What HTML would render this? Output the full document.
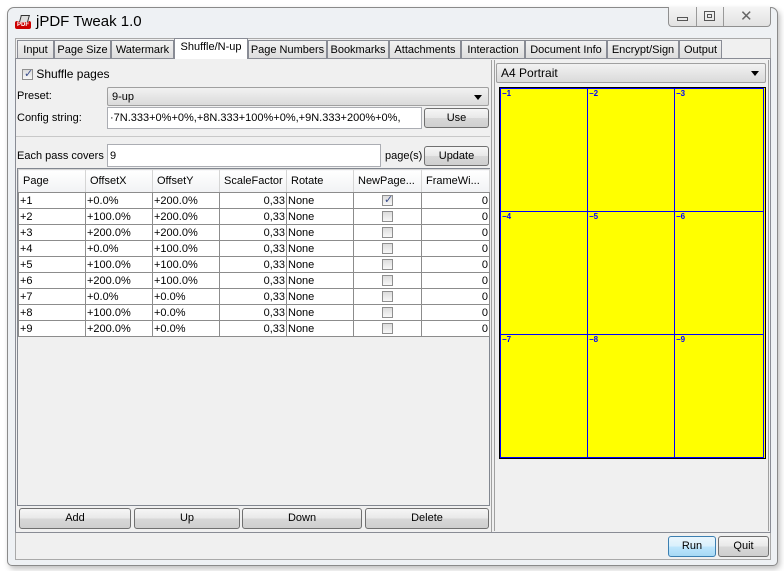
<!DOCTYPE html>
<html><head><meta charset="utf-8"><style>
*{box-sizing:border-box;margin:0;padding:0}
body{width:784px;height:571px;background:#fff;font-family:"Liberation Sans",Tahoma,sans-serif;font-size:11px;color:#000;position:relative;overflow:hidden}
.a{position:absolute}
.win{left:7px;top:7px;width:771px;height:559px;border:1px solid #8a8a8a;border-radius:7px 7px 5px 5px;background:#eef1f4;box-shadow:2px 3px 6px rgba(0,0,0,.25)}
.client{left:15px;top:38px;width:756px;height:522px;background:#f0f0f0;border:1px solid #a9a9a9}
.tab{position:absolute;top:40px;height:19px;border:1px solid #898c95;border-bottom:none;background:linear-gradient(#f2f2f2,#dcdcdc);padding:3px 0 0 0;text-align:center;white-space:nowrap;overflow:hidden}
.tab.sel{top:38px;height:21px;background:#fff;z-index:2;padding-top:2px}
.panel{left:15px;top:58px;width:756px;height:475px;border:1px solid #898c95;background:#f0f0f0}
.btn{position:absolute;border:1px solid #707070;border-radius:3px;background:linear-gradient(#f6f6f6 0,#e8e8e8 50%,#d8d8d8 51%,#cfcfcf 100%);text-align:center;line-height:18px}
.field{position:absolute;background:#fff;border:1px solid #abadb3;padding:2px 2px;white-space:nowrap;overflow:hidden}
.combo{position:absolute;border:1px solid #a0a0a0;border-radius:2px;background:linear-gradient(#f2f2f2,#dadada);padding:3px 4px}
.arrow{position:absolute;right:6px;top:7px;width:0;height:0;border-left:4px solid transparent;border-right:4px solid transparent;border-top:5px solid #000}
table{border-collapse:collapse;position:absolute;left:18px;top:169px;table-layout:fixed;width:471px}
td,th{border:1px solid #8c8c8c;height:16px;padding:0 1px;font-weight:normal;white-space:nowrap;overflow:hidden;background:#fff;line-height:14px}
th{height:23px;background:linear-gradient(#fff,#f1f2f4);border-color:#d5d5d5 #d5d5d5 #8c8c8c;text-align:left;padding-left:4px}
td.r{text-align:right}
.cb{display:inline-block;width:11px;height:11px;border:1px solid #8f8f8f;background:linear-gradient(#ddd,#f8f8f8);vertical-align:middle;position:relative}
.cell{position:absolute;border:1px solid #0000ff;}
.lbl{position:absolute;font-size:8px;color:#00f;font-weight:bold;line-height:8px}
</style></head><body>
<div class="a win"></div>
<div class="a" style="left:15px;top:15px;width:16px;height:14px">
<div class="a" style="left:0;top:6px;width:16px;height:8px;background:#c00;border-radius:2px;color:#fff;font-size:6px;font-weight:bold;text-align:center;line-height:8px">PDF</div>
<div class="a" style="left:5px;top:0;width:9px;height:7px;border:1px solid #333;border-bottom:none;background:#ddd;transform:skewX(-15deg)"></div>
</div>
<div class="a" style="left:36px;top:13px;font-size:15px;color:#000">jPDF Tweak 1.0</div>
<div class="a" style="left:668px;top:7px;width:103px;height:20px;border:1px solid #8f8f8f;border-top:none;border-radius:0 0 4px 4px;background:linear-gradient(#f5f5f5,#e2e2e2)"></div>
<div class="a" style="left:696px;top:7px;width:1px;height:19px;background:#999"></div>
<div class="a" style="left:723px;top:7px;width:1px;height:19px;background:#999"></div>
<div class="a" style="left:677px;top:17px;width:11px;height:4px;border:1px solid #555"></div>
<div class="a" style="left:704px;top:11px;width:11px;height:10px;border:1px solid #555"><div class="a" style="left:2px;top:2px;width:5px;height:4px;border:1px solid #555"></div></div>
<div class="a" style="left:740px;top:7px;font-size:15px;color:#666">✕</div>
<div class="a client"></div>
<div class="tab" style="left:17px;width:37px">Input</div>
<div class="tab" style="left:54px;width:57px">Page Size</div>
<div class="tab" style="left:111px;width:63px">Watermark</div>
<div class="tab sel" style="left:174px;width:74px">Shuffle/N-up</div>
<div class="tab" style="left:248px;width:79px">Page Numbers</div>
<div class="tab" style="left:327px;width:62px">Bookmarks</div>
<div class="tab" style="left:389px;width:72px">Attachments</div>
<div class="tab" style="left:461px;width:64px">Interaction</div>
<div class="tab" style="left:525px;width:82px">Document Info</div>
<div class="tab" style="left:607px;width:72px">Encrypt/Sign</div>
<div class="tab" style="left:679px;width:43px">Output</div>
<div class="a panel"></div>
<div class="a" style="left:15px;top:60px;width:477px;height:472px;border-right:1px solid #a0a0a0"></div>
<div class="a" style="left:494px;top:60px;width:1px;height:471px;background:#a0a0a0"></div>
<div class="a" style="left:768px;top:60px;width:1px;height:471px;background:#a0a0a0"></div>
<div class="a" style="left:22px;top:67px;font-size:12px"><span class="cb"><span class="a" style="left:1px;top:-3px;color:#3c4f8c;font-size:11px">✓</span></span> Shuffle pages</div>
<div class="a" style="left:17px;top:90px">Preset:</div>
<div class="combo" style="left:107px;top:87px;width:382px;height:19px">9-up<div class="arrow"></div></div>
<div class="a" style="left:17px;top:112px">Config string:</div>
<div class="field" style="left:107px;top:107px;width:315px;height:22px;padding-top:4px">·7N.333+0%+0%,+8N.333+100%+0%,+9N.333+200%+0%,</div>
<div class="btn" style="left:424px;top:108px;width:65px;height:20px">Use</div>
<div class="a" style="left:16px;top:136px;width:474px;height:1px;background:#c8c8c8"></div>
<div class="a" style="left:17px;top:150px">Each pass covers</div>
<div class="field" style="left:107px;top:144px;width:274px;height:23px;padding-top:5px">9</div>
<div class="a" style="left:385px;top:150px">page(s)</div>
<div class="btn" style="left:424px;top:146px;width:65px;height:20px">Update</div>
<div class="a" style="left:17px;top:168px;width:473px;height:338px;border:1px solid #828790;background:#f0f0f0"></div>
<table>
<colgroup><col style="width:67px"><col style="width:67px"><col style="width:67px"><col style="width:67px"><col style="width:67px"><col style="width:68px"><col style="width:68px"></colgroup>
<tr><th>Page</th><th>OffsetX</th><th>OffsetY</th><th>ScaleFactor</th><th>Rotate</th><th>NewPage...</th><th>FrameWi...</th></tr>
<tr><td>+1</td><td>+0.0%</td><td>+200.0%</td><td class="r">0,33</td><td>None</td><td style="text-align:center"><span class="cb"><span class="a" style="left:1px;top:-3px;color:#3c4f8c;font-size:11px">✓</span></span></td><td class="r">0</td></tr>
<tr><td>+2</td><td>+100.0%</td><td>+200.0%</td><td class="r">0,33</td><td>None</td><td style="text-align:center"><span class="cb"></span></td><td class="r">0</td></tr>
<tr><td>+3</td><td>+200.0%</td><td>+200.0%</td><td class="r">0,33</td><td>None</td><td style="text-align:center"><span class="cb"></span></td><td class="r">0</td></tr>
<tr><td>+4</td><td>+0.0%</td><td>+100.0%</td><td class="r">0,33</td><td>None</td><td style="text-align:center"><span class="cb"></span></td><td class="r">0</td></tr>
<tr><td>+5</td><td>+100.0%</td><td>+100.0%</td><td class="r">0,33</td><td>None</td><td style="text-align:center"><span class="cb"></span></td><td class="r">0</td></tr>
<tr><td>+6</td><td>+200.0%</td><td>+100.0%</td><td class="r">0,33</td><td>None</td><td style="text-align:center"><span class="cb"></span></td><td class="r">0</td></tr>
<tr><td>+7</td><td>+0.0%</td><td>+0.0%</td><td class="r">0,33</td><td>None</td><td style="text-align:center"><span class="cb"></span></td><td class="r">0</td></tr>
<tr><td>+8</td><td>+100.0%</td><td>+0.0%</td><td class="r">0,33</td><td>None</td><td style="text-align:center"><span class="cb"></span></td><td class="r">0</td></tr>
<tr><td>+9</td><td>+200.0%</td><td>+0.0%</td><td class="r">0,33</td><td>None</td><td style="text-align:center"><span class="cb"></span></td><td class="r">0</td></tr>
</table>
<div class="btn" style="left:19px;top:508px;width:112px;height:21px">Add</div>
<div class="btn" style="left:134px;top:508px;width:106px;height:21px">Up</div>
<div class="btn" style="left:242px;top:508px;width:120px;height:21px">Down</div>
<div class="btn" style="left:365px;top:508px;width:124px;height:21px">Delete</div>
<div class="combo" style="left:496px;top:63px;width:270px;height:20px;font-size:12px;padding-top:2px">A4 Portrait<div class="arrow"></div></div>
<div class="a" style="left:499px;top:87px;width:267px;height:372px;border:1px solid #000;background:#ff0"></div>
<div class="a" style="left:500px;top:88px;width:264px;height:370px;border:1px solid #00f"></div>
<div class="cell" style="left:500px;top:88px;width:88px;height:124px"></div>
<div class="cell" style="left:587px;top:88px;width:88px;height:124px"></div>
<div class="cell" style="left:674px;top:88px;width:90px;height:124px"></div>
<div class="cell" style="left:500px;top:211px;width:88px;height:124px"></div>
<div class="cell" style="left:587px;top:211px;width:88px;height:124px"></div>
<div class="cell" style="left:674px;top:211px;width:90px;height:124px"></div>
<div class="cell" style="left:500px;top:334px;width:88px;height:124px"></div>
<div class="cell" style="left:587px;top:334px;width:88px;height:124px"></div>
<div class="cell" style="left:674px;top:334px;width:90px;height:124px"></div>
<div class="lbl" style="left:502px;top:90px">−1</div><div class="lbl" style="left:589px;top:90px">−2</div><div class="lbl" style="left:676px;top:90px">−3</div>
<div class="lbl" style="left:502px;top:213px">−4</div><div class="lbl" style="left:589px;top:213px">−5</div><div class="lbl" style="left:676px;top:213px">−6</div>
<div class="lbl" style="left:502px;top:336px">−7</div><div class="lbl" style="left:589px;top:336px">−8</div><div class="lbl" style="left:676px;top:336px">−9</div>
<div class="btn" style="left:668px;top:536px;width:48px;height:21px;border-color:#3c7fb1;background:linear-gradient(#eaf6fd,#d9f0fc 50%,#bee6fd 51%,#a7d9f5)">Run</div>
<div class="btn" style="left:718px;top:536px;width:51px;height:21px">Quit</div>
</body></html>
